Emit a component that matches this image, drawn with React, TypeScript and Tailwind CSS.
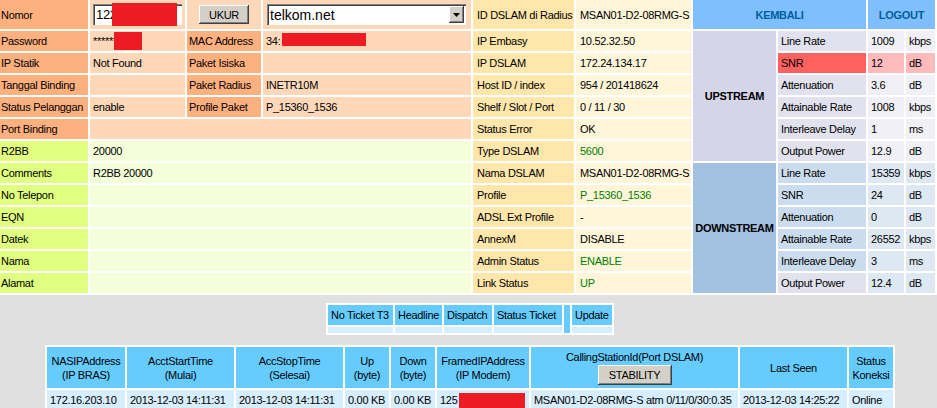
import React from 'react'

const LBL_OR = 'bg-[#ffb07f]'
const VAL_OR = 'bg-[#ffd8ba]'
const LBL_GR = 'bg-[#e0ff80]'
const VAL_GR = 'bg-[#f4ffd9]'
const LBL_MID = 'bg-[#ffe6aa]'
const VAL_MID = 'bg-[#fff5d9]'

const cell = 'flex items-center whitespace-nowrap overflow-hidden'

function C({ bg, children, className = '' }: { bg: string; children?: React.ReactNode; className?: string }) {
  return <div className={`${cell} ${bg} ${className}`}>{children}</div>
}

function Red({ className }: { className: string }) {
  return <span className={`absolute bg-[#ed1c24] ${className}`} />
}

const UP = [
  ['Line Rate', '1009', 'kbps'],
  ['SNR', '12', 'dB'],
  ['Attenuation', '3.6', 'dB'],
  ['Attainable Rate', '1008', 'kbps'],
  ['Interleave Delay', '1', 'ms'],
  ['Output Power', '12.9', 'dB'],
]

const DOWN = [
  ['Line Rate', '15359', 'kbps'],
  ['SNR', '24', 'dB'],
  ['Attenuation', '0', 'dB'],
  ['Attainable Rate', '26552', 'kbps'],
  ['Interleave Delay', '3', 'ms'],
  ['Output Power', '12.4', 'dB'],
]

const MID: [string, string, boolean][] = [
  ['ID DSLAM di Radius', 'MSAN01-D2-08RMG-S', false],
  ['IP Embasy', '10.52.32.50', false],
  ['IP DSLAM', '172.24.134.17', false],
  ['Host ID / index', '954 / 201418624', false],
  ['Shelf / Slot / Port', '0 / 11 / 30', false],
  ['Status Error', 'OK', false],
  ['Type DSLAM', '5600', true],
  ['Nama DSLAM', 'MSAN01-D2-08RMG-S', false],
  ['Profile', 'P_15360_1536', true],
  ['ADSL Ext Profile', '-', false],
  ['AnnexM', 'DISABLE', false],
  ['Admin Status', 'ENABLE', true],
  ['Link Status', 'UP', true],
]

const GREEN_ROWS: [string, string][] = [
  ['R2BB', '20000'],
  ['Comments', 'R2BB 20000'],
  ['No Telepon', ''],
  ['EQN', ''],
  ['Datek', ''],
  ['Nama', ''],
  ['Alamat', ''],
]

function Mid({ i }: { i: number }) {
  const [l, v, g] = MID[i]
  return (
    <>
      <C bg={LBL_MID} className="pl-[4px]">{l}</C>
      <C bg={VAL_MID} className={`pl-[4px] ${g ? 'text-[#008000]' : ''}`}>{v}</C>
    </>
  )
}

function Stream({ row, down, last }: { row: string[]; down: boolean; last: boolean }) {
  const snr = !down && row[0] === 'SNR'
  const lbl = snr ? 'bg-[#ff6060]' : down && !last ? 'bg-[#cbdcee]' : 'bg-[#e2e2ef]'
  const val = snr ? 'bg-[#ffbbbb]' : down ? 'bg-[#dde8f3]' : 'bg-[#f0f0f6]'
  return (
    <>
      <C bg={lbl} className="pl-[3px]">{row[0]}</C>
      <C bg={val} className="pl-[3px]">{row[1]}</C>
      <C bg={val} className="pl-[3px]">{row[2]}</C>
    </>
  )
}

const HEAD = [
  ['NASIPAddress', '(IP BRAS)'],
  ['AcctStartTime', '(Mulai)'],
  ['AccStopTime', '(Selesai)'],
  ['Up', '(byte)'],
  ['Down', '(byte)'],
  ['FramedIPAddress', '(IP Modem)'],
]

const DATA = [
  '172.16.203.10',
  '2013-12-03 14:11:31',
  '2013-12-03 14:11:31',
  '0.00 KB',
  '0.00 KB',
]

const winBtn =
  'bg-[#d4d0c8] shadow-[inset_-1px_-1px_0_#404040,inset_1px_1px_0_#ffffff,inset_-2px_-2px_0_#808080]'

export default function App() {
  const left: [string, string, string, string][] = [
    ['Password', '', 'MAC Address', ''],
    ['IP Statik', 'Not Found', 'Paket Isiska', ''],
    ['Tanggal Binding', '', 'Paket Radius', 'INETR10M'],
    ['Status Pelanggan', 'enable', 'Profile Paket', 'P_15360_1536'],
  ]

  return (
    <div className="w-[937px] h-[408px] overflow-hidden bg-white text-[11px] leading-[14px] tracking-[-0.3px] text-black font-['Liberation_Sans',Arial,sans-serif]">
      <div className="grid grid-cols-[88px_95px_74px_208px_101px_115px_83px_88px_36px_29px] grid-rows-[29px_repeat(12,20px)] gap-[2px] w-[935px] mb-[2px]">
        {/* row 1 */}
        <C bg={LBL_OR} className="pl-[1px]">Nomor</C>
        <C bg={VAL_OR} className="pl-[3px]">
          <div className="relative w-[89px] h-[21px] bg-white shadow-[inset_1px_1px_0_#808080,inset_2px_2px_0_#404040,inset_-1px_-1px_0_#ffffff] flex items-center pl-[3px] text-[13px]">
            122
            <Red className="left-[19px] -top-[1px] w-[65px] h-[23px]" />
          </div>
        </C>
        <C bg={VAL_OR} className="justify-center">
          <div className={`w-[50px] h-[19px] flex items-center justify-center ${winBtn}`}>UKUR</div>
        </C>
        <C bg={VAL_OR} className="pl-[4px]">
          <div className="w-[199px] h-[21px] bg-white shadow-[inset_1px_1px_0_#808080,inset_2px_2px_0_#404040] flex items-center">
            <span className="flex-1 pl-[3px] text-[14px] tracking-normal">telkom.net</span>
            <span className={`w-[15px] h-[17px] mr-[2px] flex items-center justify-center ${winBtn}`}>
              <svg width="7" height="4" viewBox="0 0 7 4"><polygon points="0,0 7,0 3.5,4" fill="#000" /></svg>
            </span>
          </div>
        </C>
        <Mid i={0} />
        <div className={`${cell} col-span-2 justify-center bg-[#7fbfff] text-[#00609c] font-bold`}>KEMBALI</div>
        <div className={`${cell} col-span-2 justify-center bg-[#7fbfff] text-[#00609c] font-bold`}>LOGOUT</div>

        {/* rows 2-5 */}
        {left.map((r, i) => (
          <React.Fragment key={r[0]}>
            <C bg={LBL_OR} className="pl-[1px]">{r[0]}</C>
            <C bg={VAL_OR} className="pl-[3px] relative">
              {i === 0 ? (
                <>
                  ******
                  <Red className="left-[24px] top-[1px] w-[28px] h-[18px]" />
                </>
              ) : r[1]}
            </C>
            <C bg={LBL_OR} className="pl-[2px]">{r[2]}</C>
            <C bg={VAL_OR} className="pl-[3px] relative">
              {i === 0 ? (
                <>
                  34:
                  <Red className="left-[19px] top-[2px] w-[84px] h-[13px]" />
                </>
              ) : r[3]}
            </C>
            <Mid i={i + 1} />
            {i === 0 && (
              <div className={`${cell} row-span-6 justify-center bg-[#d5d5ea] font-bold`}>UPSTREAM</div>
            )}
            <Stream row={UP[i]} down={false} last={false} />
          </React.Fragment>
        ))}

        {/* row 6 */}
        <C bg={LBL_OR} className="pl-[1px]">Port Binding</C>
        <C bg={VAL_OR} className="col-span-3" />
        <Mid i={5} />
        <Stream row={UP[4]} down={false} last={false} />

        {/* rows 7-13 */}
        {GREEN_ROWS.map((r, i) => (
          <React.Fragment key={r[0]}>
            <C bg={LBL_GR} className="pl-[1px]">{r[0]}</C>
            <C bg={VAL_GR} className="col-span-3 pl-[3px]">{r[1]}</C>
            <Mid i={i + 6} />
            {i === 1 && (
              <div className={`${cell} row-span-6 justify-center bg-[#a3c1e1] font-bold`}>DOWNSTREAM</div>
            )}
            {i === 0 ? (
              <Stream row={UP[5]} down={false} last={false} />
            ) : (
              <Stream row={DOWN[i - 1]} down={true} last={i === 6} />
            )}
          </React.Fragment>
        ))}
      </div>

      <div className="bg-[#e0e0e0] h-[113px] pt-[8px]">
        <div className="ml-[326px] w-[288px] bg-white p-[2px] grid grid-cols-[65px_47px_48px_68px_6px_40px] grid-rows-[20px_6px] gap-[2px]">
          <C bg="bg-[#66ccff]" className="pl-[3px]">No Ticket T3</C>
          <C bg="bg-[#66ccff]" className="pl-[3px]">Headline</C>
          <C bg="bg-[#66ccff]" className="pl-[3px]">Dispatch</C>
          <C bg="bg-[#66ccff]" className="pl-[3px]">Status Ticket</C>
          <div className="row-span-2 bg-[#66ccff]" />
          <C bg="bg-[#66ccff]" className="pl-[3px]">Update</C>
          <div className="bg-[#d6eeff]" />
          <div className="bg-[#d6eeff]" />
          <div className="bg-[#d6eeff]" />
          <div className="bg-[#d6eeff]" />
          <div className="bg-[#d6eeff]" />
        </div>

        <div className="ml-[45px] mt-[10px] w-[850px] bg-white p-[2px] grid grid-cols-[78px_107px_107px_44px_44px_92px_207px_107px_44px] grid-rows-[41px_20px] gap-[2px]">
          {HEAD.map(h => (
            <div key={h[0]} className="bg-[#66ccff] flex flex-col items-center justify-center text-center whitespace-nowrap">
              <span>{h[0]}</span>
              <span>{h[1]}</span>
            </div>
          ))}
          <div className="bg-[#66ccff] flex flex-col items-center pt-[3px] whitespace-nowrap">
            <span>CallingStationId(Port DSLAM)</span>
            <div className={`mt-[1px] w-[74px] h-[20px] flex items-center justify-center ${winBtn}`}>STABILITY</div>
          </div>
          <div className="bg-[#66ccff] flex items-center justify-center">Last Seen</div>
          <div className="bg-[#66ccff] flex flex-col items-center justify-center">
            <span>Status</span>
            <span>Koneksi</span>
          </div>

          {DATA.map((d, i) => (
            <C key={i} bg="bg-[#d6eeff]" className="pl-[3px]">{d}</C>
          ))}
          <C bg="bg-[#d6eeff]" className="pl-[3px] relative">
            125
            <Red className="left-[22px] top-[3px] w-[66px] h-[17px]" />
          </C>
          <C bg="bg-[#d6eeff]" className="pl-[3px]">MSAN01-D2-08RMG-S atm 0/11/0/30:0.35</C>
          <C bg="bg-[#d6eeff]" className="pl-[3px]">2013-12-03 14:25:22</C>
          <C bg="bg-[#d6eeff]" className="pl-[3px]">Online</C>
        </div>
      </div>
    </div>
  )
}
